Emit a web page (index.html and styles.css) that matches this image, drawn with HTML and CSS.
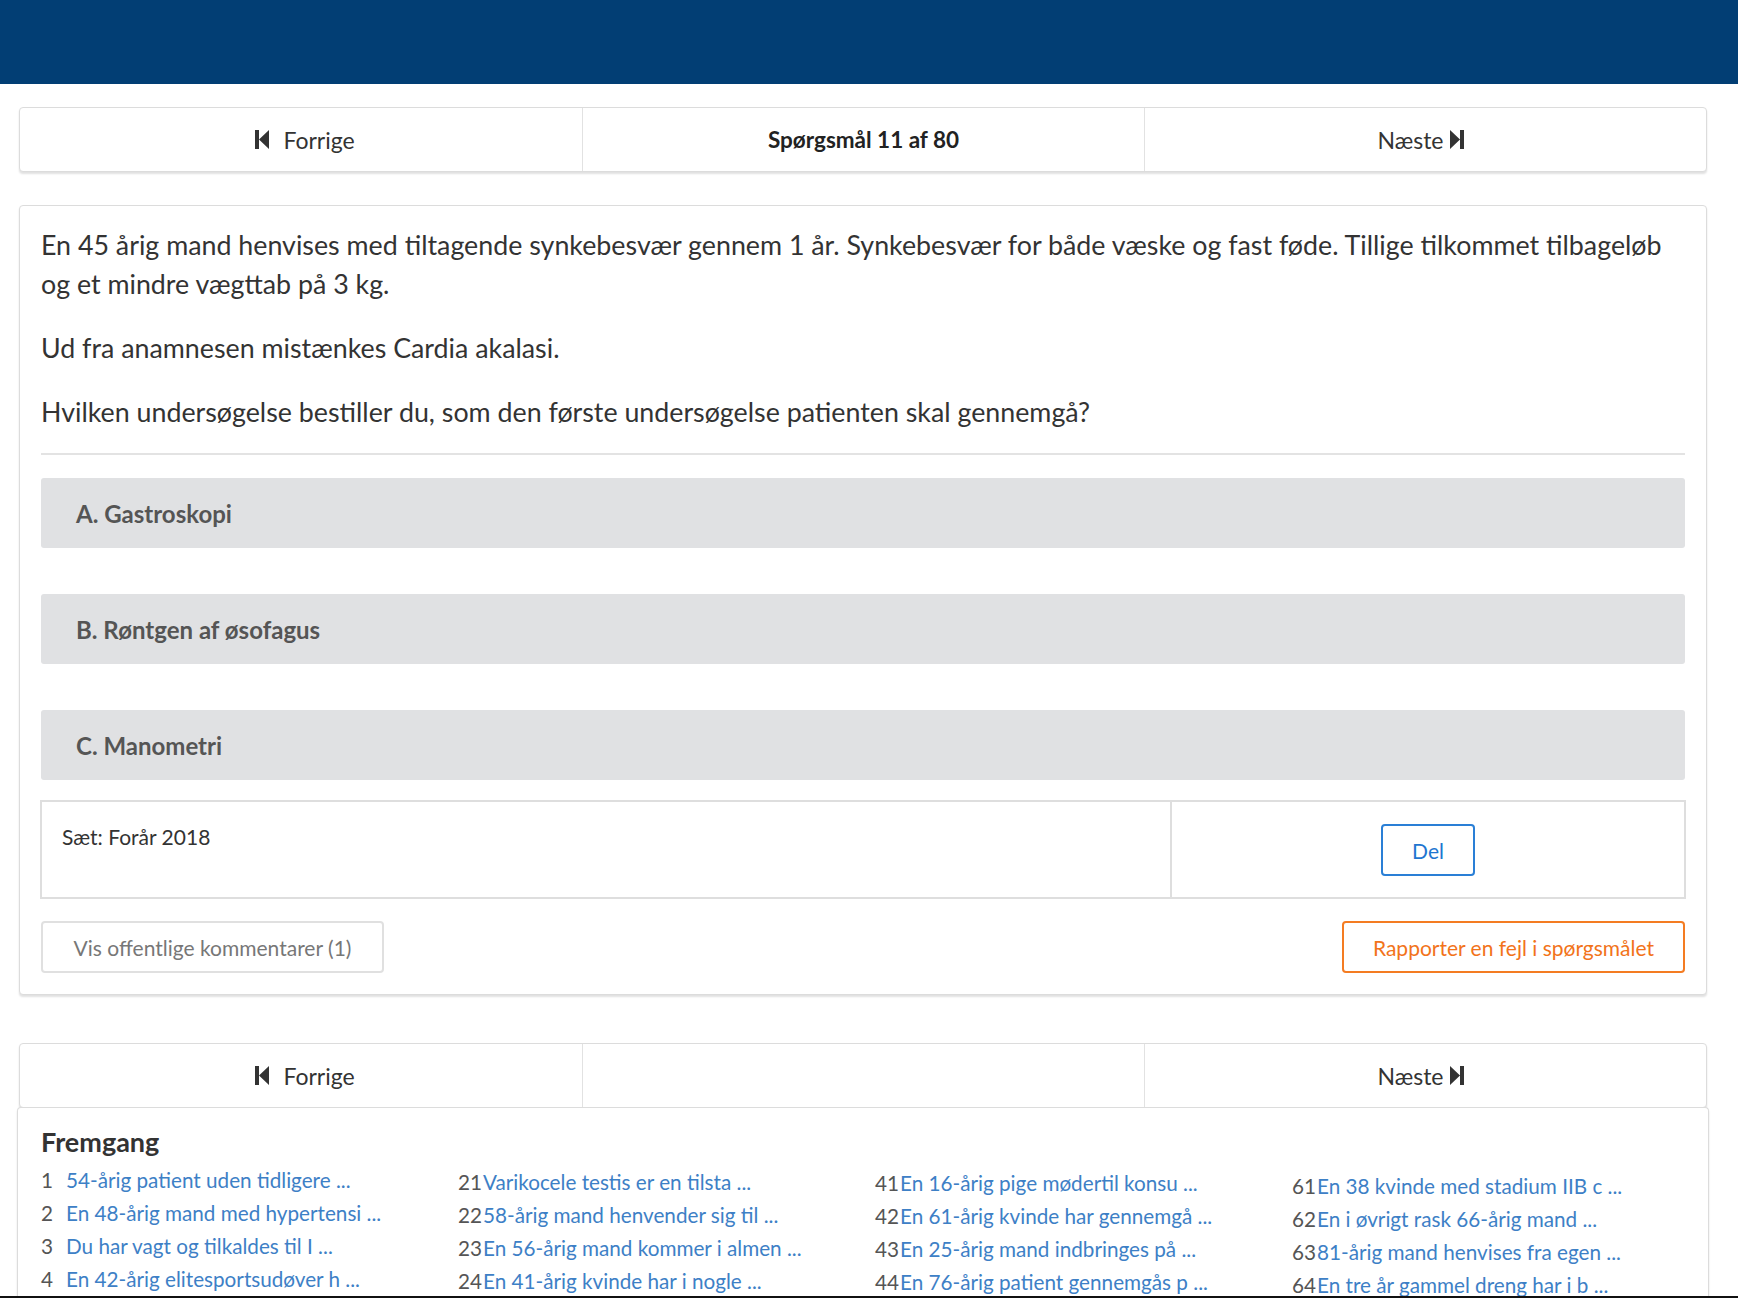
FILE: index.html
```html
<!DOCTYPE html>
<html lang="da">
<head>
<meta charset="utf-8">
<title>Spørgsmål 11 af 80</title>
<link rel="stylesheet" href="styles.css">
</head>
<body>
<header class="topbar"></header>
<main class="page">
  <nav class="qnav">
    <div class="qnav-cell qnav-prev"><svg class="ico ico-prev" viewBox="0 0 14 19"><path d="M0 0h4v19H0z M14 0v19L4 9.5z"/></svg>Forrige</div>
    <div class="qnav-cell qnav-title">Spørgsmål 11 af 80</div>
    <div class="qnav-cell qnav-next">Næste<svg class="ico ico-next" viewBox="0 0 14 19"><path d="M0 0v19l10-9.5z M10 0h4v19h-4z"/></svg></div>
  </nav>

  <section class="card question">
    <p>En 45 årig mand henvises med tiltagende synkebesvær gennem 1 år. Synkebesvær for både væske og fast føde. Tillige tilkommet tilbageløb og et mindre vægttab på 3 kg.</p>
    <p>Ud fra anamnesen mistænkes Cardia akalasi.</p>
    <p>Hvilken undersøgelse bestiller du, som den første undersøgelse patienten skal gennemgå?</p>
    <hr class="divider">
    <div class="options">
      <div class="option">A. Gastroskopi</div>
      <div class="option">B. Røntgen af øsofagus</div>
      <div class="option">C. Manometri</div>
    </div>
    <div class="meta">
      <div class="meta-set">Sæt: Forår 2018</div>
      <div class="meta-share"><button class="btn btn-blue">Del</button></div>
    </div>
    <div class="actions">
      <button class="btn btn-gray">Vis offentlige kommentarer (1)</button>
      <button class="btn btn-orange">Rapporter en fejl i spørgsmålet</button>
    </div>
  </section>

  <nav class="qnav qnav-bottom">
    <div class="qnav-cell qnav-prev"><svg class="ico ico-prev" viewBox="0 0 14 19"><path d="M0 0h4v19H0z M14 0v19L4 9.5z"/></svg>Forrige</div>
    <div class="qnav-cell"></div>
    <div class="qnav-cell qnav-next">Næste<svg class="ico ico-next" viewBox="0 0 14 19"><path d="M0 0v19l10-9.5z M10 0h4v19h-4z"/></svg></div>
  </nav>

  <section class="card progress">
    <h2>Fremgang</h2>
    <div class="cols">
      <ul class="col">
        <li><span class="num">1</span><a href="#">54-årig patient uden tidligere ...</a></li>
        <li><span class="num">2</span><a href="#">En 48-årig mand med hypertensi ...</a></li>
        <li><span class="num">3</span><a href="#">Du har vagt og tilkaldes til I ...</a></li>
        <li><span class="num">4</span><a href="#">En 42-årig elitesportsudøver h ...</a></li>
      </ul>
      <ul class="col">
        <li><span class="num">21</span><a href="#">Varikocele testis er en tilsta ...</a></li>
        <li><span class="num">22</span><a href="#">58-årig mand henvender sig til ...</a></li>
        <li><span class="num">23</span><a href="#">En 56-årig mand kommer i almen ...</a></li>
        <li><span class="num">24</span><a href="#">En 41-årig kvinde har i nogle ...</a></li>
      </ul>
      <ul class="col">
        <li><span class="num">41</span><a href="#">En 16-årig pige mødertil konsu ...</a></li>
        <li><span class="num">42</span><a href="#">En 61-årig kvinde har gennemgå ...</a></li>
        <li><span class="num">43</span><a href="#">En 25-årig mand indbringes på ...</a></li>
        <li><span class="num">44</span><a href="#">En 76-årig patient gennemgås p ...</a></li>
      </ul>
      <ul class="col">
        <li><span class="num">61</span><a href="#">En 38 kvinde med stadium IIB c ...</a></li>
        <li><span class="num">62</span><a href="#">En i øvrigt rask 66-årig mand ...</a></li>
        <li><span class="num">63</span><a href="#">81-årig mand henvises fra egen ...</a></li>
        <li><span class="num">64</span><a href="#">En tre år gammel dreng har i b ...</a></li>
      </ul>
    </div>
  </section>
</main>
<div class="edge"></div>
</body>
</html>
```

FILE: styles.css
```css
* { box-sizing: border-box; }
html, body { margin: 0; padding: 0; }
body {
  font-family: Lato, "Open Sans", "Liberation Sans", sans-serif;
  color: #333;
  background: #fff;
  height: 1298px;
  overflow: hidden;
}
.topbar {
  height: 84px;
  background: #023e74;
}
.page {
  width: 1688px;
  margin-left: 19px;
}
.qnav {
  margin-top: 23px;
  height: 65px;
  display: grid;
  grid-template-columns: 1fr 1fr 1fr;
  border: 1px solid #dcdcdc;
  border-radius: 4px;
  box-shadow: 0 2px 2px rgba(0,0,0,0.12);
  background: #fff;
}
.qnav-cell {
  display: flex;
  align-items: center;
  justify-content: center;
  font-size: 23px;
  color: #333;
}
.qnav-cell + .qnav-cell { border-left: 1px solid #e2e2e2; }
.qnav-prev { padding-left: 8px; }
.qnav-next { padding-right: 10px; }
.qnav-title { font-weight: 700; color: #222; font-size: 22.5px; }
.ico { width: 14px; height: 19px; fill: #333; }
.ico-prev { margin-right: 14px; }
.ico-next { margin-left: 6px; }

.card {
  border: 1px solid #dcdcdc;
  border-radius: 4px;
  box-shadow: 0 2px 2px rgba(0,0,0,0.12);
  background: #fff;
}
.question {
  margin-top: 33px;
  padding: 20px 21px 21px;
}
.question p {
  margin: 0 0 25px;
  font-size: 26.8px;
  line-height: 39px;
  color: #333;
}
.question p:nth-of-type(3) { margin-bottom: 21px; }
.divider {
  border: 0;
  border-top: 2px solid #e3e3e3;
  margin: 0 0 23px;
}
.options {
  display: flex;
  flex-direction: column;
  gap: 46px;
}
.option {
  height: 70px;
  display: flex;
  align-items: center;
  padding-left: 35px;
  background: #e0e1e3;
  border-radius: 3px;
  font-size: 24px;
  font-weight: 700;
  color: #555;
}
.meta {
  margin: 20px -1px 0;
  height: 99px;
  display: grid;
  grid-template-columns: 1130px 1fr;
  border: 2px solid #dedede;
}
.meta-set {
  padding: 22px 20px;
  font-size: 21px;
  color: #333;
  border-right: 2px solid #dedede;
}
.meta-share {
  display: flex;
  justify-content: center;
  padding-top: 22px;
}
.btn {
  font-family: inherit;
  font-size: 21px;
  background: #fff;
  border-radius: 4px;
  height: 52px;
  cursor: pointer;
}
.btn-blue {
  width: 94px;
  border: 2px solid #2a7fd6;
  color: #1f76d0;
}
.actions {
  margin-top: 22px;
  display: flex;
  justify-content: space-between;
}
.btn-gray {
  width: 343px;
  border: 2px solid #e0e0e0;
  color: #777;
}
.btn-orange {
  width: 343px;
  border: 2px solid #f47c22;
  color: #f2731a;
}
.qnav-bottom { margin-top: 48px; }

.progress {
  margin: -1px -2px 0;
  padding: 17px 23px 0;
  border-bottom: 0;
  border-radius: 4px 4px 0 0;
  height: 300px;
}
.progress h2 {
  margin: 0 0 6px;
  font-size: 27px;
  line-height: 33px;
  font-weight: 700;
  color: #333;
}
.cols {
  display: grid;
  grid-template-columns: repeat(4, 417px);
}
.col {
  list-style: none;
  margin: 0;
  padding: 0;
}
.col:nth-child(2) { padding-top: 2px; }
.col:nth-child(3) { padding-top: 3px; }
.col:nth-child(4) { padding-top: 6px; }
.col li {
  display: flex;
  font-size: 20.7px;
  line-height: 33px;
  white-space: nowrap;
}
.num {
  width: 25px;
  flex: none;
  color: #555;
}
.col a {
  color: #3d80c6;
  text-decoration: none;
}
.edge {
  position: fixed;
  left: 0;
  right: 0;
  bottom: 0;
  height: 2px;
  background: #111;
}
```
